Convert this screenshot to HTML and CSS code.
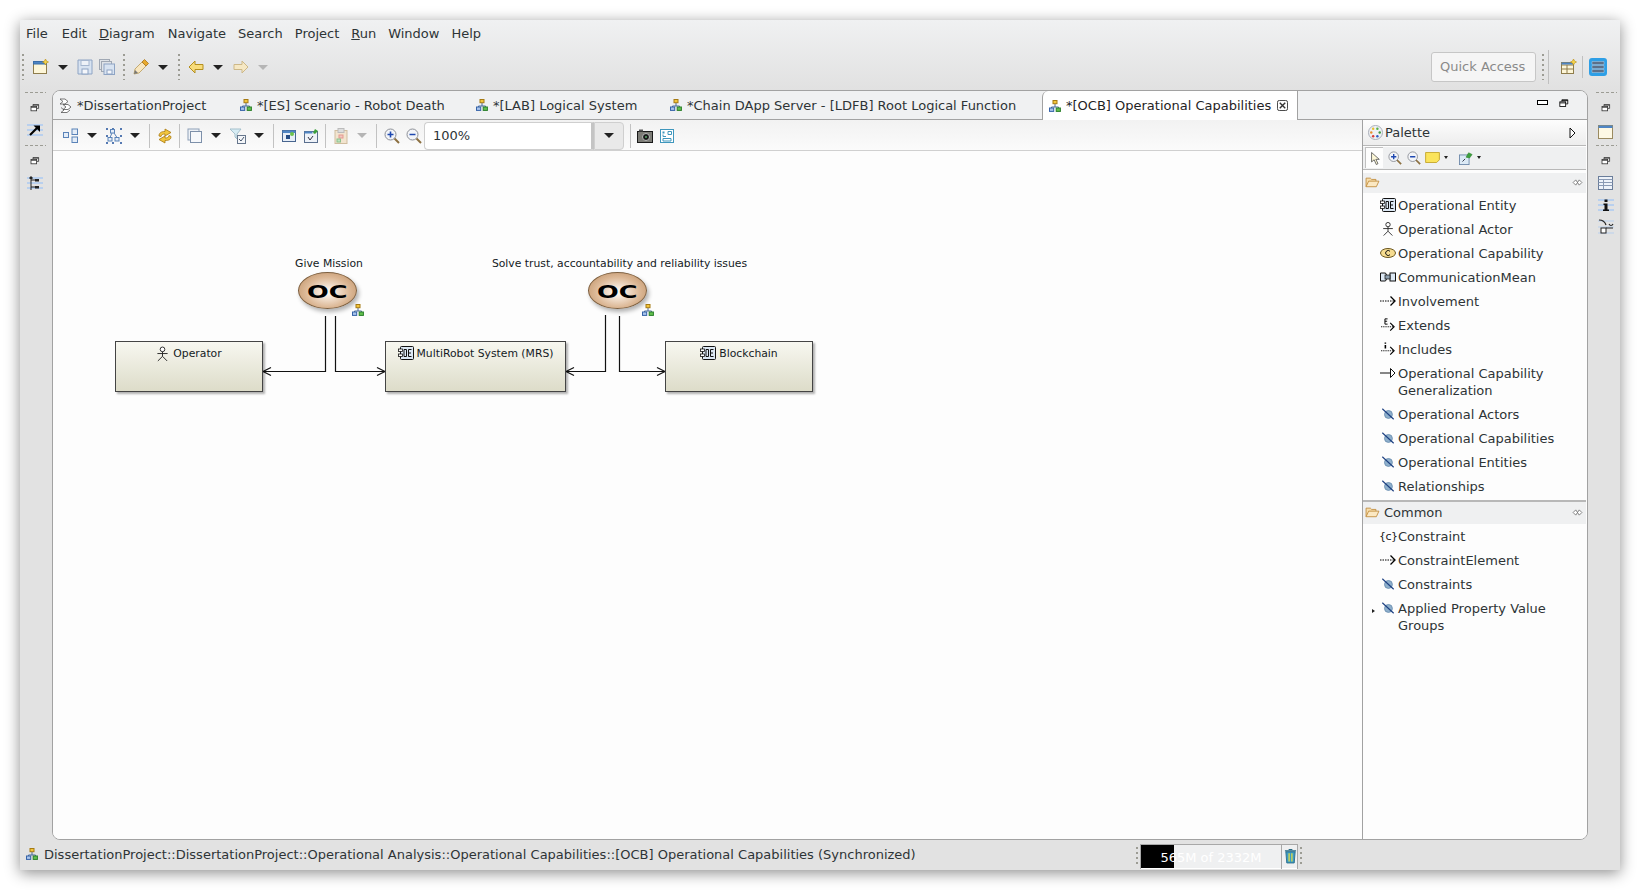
FILE: index.html
```html
<!DOCTYPE html>
<html lang="en">
<head>
    <meta charset="UTF-8">
    <title>Capella - Operational Capabilities</title>
    <link rel="stylesheet" href="styles.css">
</head>
<body>
    <!-- Icon set -->
    <svg class="defs" xmlns="http://www.w3.org/2000/svg">
        <symbol id="i-hier" viewBox="0 0 12 12">
            <path d="M6 4v3M2.500 9V7h7v2" fill="none" stroke="#4a6a9a"/>
            <rect x="4" y="0.500" width="4" height="3.200" fill="#f3c63c" stroke="#a67a12"/>
            <rect x="0.500" y="8" width="4.200" height="3.400" fill="#a9c4ea" stroke="#3562a8"/>
            <rect x="7.200" y="8" width="4.200" height="3.400" fill="#63c04e" stroke="#2a7f2a"/>
        </symbol>
        <symbol id="i-caps" viewBox="0 0 16 16">
            <path d="M2 2h5l3 2.500-3 2.500h-5l3-2.500zM5 7.500h5l3 2.500-3 2.500H5l3-2.500zM3 10.500l3 2.500-3 2.500h6l3-2.500" fill="#fff" stroke="#555" stroke-width="0.800"/>
        </symbol>
        <symbol id="i-restore" viewBox="0 0 12 10">
            <path d="M3.500 2.500V0.500h7v5H8.500" fill="none" stroke="#333"/>
            <rect x="1" y="3" width="7" height="5.500" fill="#fff" stroke="#333"/>
            <path d="M1 4.200h7M3.500 1.500h7" stroke="#333"/>
        </symbol>
        <symbol id="i-new" viewBox="0 0 16 16">
            <rect x="0.500" y="2.500" width="13" height="12" fill="#fdf6d8" stroke="#8f7d4c"/>
            <rect x="0.500" y="2.500" width="13" height="2.500" fill="#4f85c4" stroke="#3b6ea8"/>
            <path d="M12.500 0l1 2 2 1-2 1-1 2-1-2-2-1 2-1z" fill="#f7d54a" stroke="#b98d12" stroke-width="0.600"/>
        </symbol>
        <symbol id="i-save" viewBox="0 0 16 16">
            <path d="M1 1h14v14H1z" fill="#d8e3f1" stroke="#8ea4c4"/>
            <rect x="4" y="1.500" width="8" height="5" fill="#eef2f8" stroke="#a6b7d0"/>
            <rect x="5" y="10" width="6" height="5" fill="#f5f7fb" stroke="#8ea4c4"/>
        </symbol>
        <symbol id="i-saveall" viewBox="0 0 16 16">
            <rect x="0.500" y="0.500" width="10" height="10" fill="#dfe3e8" stroke="#a0a8b4"/>
            <rect x="2.500" y="2.500" width="10" height="10" fill="#dfe3e8" stroke="#a0a8b4"/>
            <rect x="5" y="5" width="10.500" height="10.500" fill="#d8e3f1" stroke="#8ea4c4"/>
            <rect x="8" y="11" width="5" height="4" fill="#f5f7fb" stroke="#8ea4c4"/>
        </symbol>
        <symbol id="i-pen" viewBox="0 0 16 16">
            <path d="M1 15l1-5 7-7 4 4-7 7z" fill="#f8e6c0" stroke="#b89a58" stroke-width="0.800"/>
            <path d="M9 3l2.500-2.500 4 4L13 7z" fill="#e8a92c" stroke="#a8741a" stroke-width="0.800"/>
            <path d="M1 15l1-4 3 3z" fill="#777"/>
        </symbol>
        <symbol id="i-back" viewBox="0 0 16 16">
            <path d="M1 8l6-6v3.500h8v5H7V14z" fill="#f8dc7a" stroke="#b48f1e"/>
        </symbol>
        <symbol id="i-fwd" viewBox="0 0 16 16">
            <path d="M15 8L9 2v3.500H1v5h8V14z" fill="#f6e8c4" stroke="#cdb888"/>
        </symbol>
        <symbol id="i-layout" viewBox="0 0 16 16">
            <rect x="0.500" y="4.500" width="5" height="5" fill="#e4edf8" stroke="#5a83b8"/>
            <rect x="9" y="1" width="5.500" height="5.500" fill="#e4edf8" stroke="#5a83b8"/>
            <rect x="9" y="9" width="5.500" height="5.500" fill="#e4edf8" stroke="#5a83b8"/>
        </symbol>
        <symbol id="i-select" viewBox="0 0 16 16">
            <path d="M0 1h2M7 0v2M14 1h2M0 8h2M14 8h2M0 15h2M7 14v2M14 15h2" stroke="#1f4f9a" stroke-width="1.500"/>
            <rect x="4.500" y="1.500" width="4" height="3.500" fill="#e4edf8" stroke="#5a83b8"/>
            <rect x="2" y="9.500" width="4" height="3.500" fill="#e4edf8" stroke="#5a83b8"/>
            <rect x="9" y="9.500" width="4" height="3.500" fill="#e4edf8" stroke="#5a83b8"/>
            <path d="M6 5l-2 4.500M8 5l3 4.500" stroke="#5a83b8" fill="none"/>
        </symbol>
        <symbol id="i-sync" viewBox="0 0 16 16">
            <path d="M2 8C2 5 4 3.500 8 3.500V1l6 3.500L8 8V6C6 6 4.500 6.500 4 8.500z" fill="#f2c63e" stroke="#a9790f" stroke-width="0.800"/>
            <path d="M14 8.500c0 3-2 4-6 4V15l-6-3.500 6-3.500v2c2 0 3.500-.5 4-2.500z" fill="#f2c63e" stroke="#a9790f" stroke-width="0.800"/>
        </symbol>
        <symbol id="i-copy" viewBox="0 0 16 16">
            <rect x="1" y="1" width="11" height="11" fill="#eef2f7" stroke="#8ea0b8"/>
            <rect x="3.500" y="3.500" width="11" height="11" fill="#f6f8fb" stroke="#7d90aa"/>
        </symbol>
        <symbol id="i-filter" viewBox="0 0 16 16">
            <path d="M0 1h11L7 6v5L5 9V6z" fill="#d6ecf4" stroke="#a5c0cc"/>
            <rect x="7.500" y="7.500" width="8" height="8" fill="#f4f6f9" stroke="#66768c"/>
            <path d="M9 11l2 2 3-4" fill="none" stroke="#44556c"/>
        </symbol>
        <symbol id="i-win" viewBox="0 0 16 16">
            <rect x="1.500" y="2.500" width="13" height="11" fill="#e6eef8" stroke="#47648e"/>
            <rect x="1.500" y="2.500" width="13" height="2.500" fill="#4f85c4"/>
            <rect x="5" y="7" width="4" height="4" fill="#244c86"/>
            <circle cx="11" cy="6" r="2" fill="#6cc24a"/>
        </symbol>
        <symbol id="i-wincheck" viewBox="0 0 16 16">
            <rect x="1.500" y="3.500" width="13" height="11" fill="#eef2f8" stroke="#5a6f8e"/>
            <rect x="1.500" y="3.500" width="8" height="2" fill="#4f85c4"/>
            <path d="M5 9l2 3 3-4" fill="none" stroke="#334"/>
            <path d="M10 5l2-4 3 2-3 3z" fill="#3ca03c"/>
        </symbol>
        <symbol id="i-clip" viewBox="0 0 16 16">
            <rect x="2" y="2.500" width="12" height="13" fill="#f2e4cf" stroke="#d0bd9f"/>
            <rect x="5" y="0.500" width="6" height="4" fill="#ddd" stroke="#bbb"/>
            <rect x="6" y="7" width="4" height="3" fill="#f2c6c0" stroke="#e39a90"/>
            <rect x="4" y="11" width="3.500" height="3" fill="#bfe3c0" stroke="#8ac08c"/>
        </symbol>
        <symbol id="i-zoomin" viewBox="0 0 16 16">
            <path d="M10 10l5 5" stroke="#8c7040" stroke-width="2"/>
            <circle cx="6.500" cy="6.500" r="5.500" fill="#f2f4f8" stroke="#8c8f96"/>
            <path d="M3.500 6.500h6M6.500 3.500v6" stroke="#1e48b0" stroke-width="1.600"/>
        </symbol>
        <symbol id="i-zoomout" viewBox="0 0 16 16">
            <path d="M10 10l5 5" stroke="#8c7040" stroke-width="2"/>
            <circle cx="6.500" cy="6.500" r="5.500" fill="#f2f4f8" stroke="#8c8f96"/>
            <path d="M3.500 6.500h6" stroke="#1e48b0" stroke-width="1.600"/>
        </symbol>
        <symbol id="i-camera" viewBox="0 0 16 14">
            <rect x="0.500" y="2.500" width="15" height="11" fill="#7c7c76" stroke="#1a1a1a"/>
            <rect x="2" y="0.500" width="4" height="2" fill="#555"/>
            <circle cx="9" cy="8" r="3.500" fill="#1a1a1a" stroke="#bbb"/>
            <circle cx="9" cy="8" r="1" fill="#5aa96a"/>
        </symbol>
        <symbol id="i-snap" viewBox="0 0 14 14">
            <rect x="0.500" y="0.500" width="13" height="13" fill="#fff" stroke="#3f97bd"/>
            <rect x="2.500" y="2.500" width="2" height="2" fill="#3f97bd"/>
            <path d="M3 5.500v2h3M8 2.500h3.500v3H8zM3 9.500h8v2.500H3z" fill="none" stroke="#3f97bd"/>
        </symbol>
        <symbol id="i-persp" viewBox="0 0 16 16">
            <rect x="0.500" y="3.500" width="12" height="11" fill="#fdf6d8" stroke="#8f7d4c"/>
            <path d="M0.500 6h12M6 6v8.500M0.500 10h12" stroke="#8f7d4c"/>
            <rect x="0.500" y="3.500" width="12" height="2" fill="#4f85c4"/>
            <path d="M12.500 0l1 2 2 1-2 1-1 2-1-2-2-1 2-1z" fill="#f7d54a" stroke="#b98d12" stroke-width="0.600"/>
        </symbol>
        <symbol id="i-db" viewBox="0 0 18 18">
            <rect width="18" height="18" rx="3" fill="#2e9fe6"/>
            <path d="M3 3.500h12v3H3zM3 7.500h12v3H3zM3 11.500h12v3H3z" fill="#5d7089" stroke="#cfe4f4" stroke-width="0.400"/>
        </symbol>
        <symbol id="i-arrow" viewBox="0 0 16 16">
            <path d="M0 3h16M0 8h16M0 13h16" stroke="#b9d0ee" stroke-width="2"/>
            <path d="M3 13L10 6" stroke="#000" stroke-width="2.200"/>
            <path d="M6.500 3.500h6.500v6.500z" fill="#000"/>
        </symbol>
        <symbol id="i-tree" viewBox="0 0 16 16">
            <path d="M0 3h16M0 8h16M0 13h16" stroke="#b9d0ee" stroke-width="2"/>
            <path d="M4 1v14M4 5h5M4 12h5" stroke="#222" fill="none"/>
            <rect x="2.500" y="2" width="3" height="2" fill="#222"/>
            <rect x="8" y="4" width="4" height="2.500" fill="#222"/>
            <rect x="8" y="11" width="4" height="2.500" fill="#222"/>
        </symbol>
        <symbol id="i-window" viewBox="0 0 16 14">
            <rect x="0.500" y="0.500" width="14" height="13" fill="#fdf8e4" stroke="#9a8a60"/>
            <rect x="0.500" y="0.500" width="14" height="2.500" fill="#4f85c4"/>
        </symbol>
        <symbol id="i-table" viewBox="0 0 16 14">
            <rect x="0.500" y="0.500" width="14" height="13" fill="#eef3fa" stroke="#6a7d9a"/>
            <path d="M0.500 3.500h14M0.500 6.500h14M0.500 9.500h14M5.500 3.500v10" stroke="#8a9ab4"/>
        </symbol>
        <symbol id="i-info" viewBox="0 0 16 16">
            <path d="M0 3h16M0 8h16M0 13h16" stroke="#b9d0ee" stroke-width="2"/>
            <path d="M6.500 2.500h3v2.500h-3zM5.500 6.500h4v6h1.500v1.500H5V12.500h1.500V8H5.500z" fill="#111"/>
        </symbol>
        <symbol id="i-flow" viewBox="0 0 16 16">
            <path d="M0 2h16M0 8h16M0 14h16" stroke="#b9d0ee"/>
            <path d="M1 1c4 0 6 2 7 5M11 5c1 2 3 2 4 0M8 9h7" fill="none" stroke="#222" stroke-width="1.200"/>
            <rect x="3" y="9" width="5" height="5" fill="#fff" stroke="#222"/>
        </symbol>
        <symbol id="i-palette" viewBox="0 0 16 16">
            <circle cx="8" cy="8" r="7.500" fill="#eef0f4" stroke="#a6acb6"/>
            <circle cx="5.500" cy="4" r="1.300" fill="#e8c02c"/>
            <circle cx="10" cy="4" r="1.300" fill="#56b04c"/>
            <circle cx="3.500" cy="8" r="1.300" fill="#e89030"/>
            <circle cx="12.500" cy="8" r="1.300" fill="#3e9a3e"/>
            <circle cx="5.500" cy="12" r="1.300" fill="#d83a3a"/>
            <circle cx="10" cy="12" r="1.300" fill="#2f5fc8"/>
        </symbol>
        <symbol id="i-cursor" viewBox="0 0 14 16">
            <path d="M3 1v11l3-2.500 2.500 5.500 2-1-2.500-5h4z" fill="#fdf8d8" stroke="#333" stroke-width="0.800"/>
        </symbol>
        <symbol id="i-note" viewBox="0 0 16 12">
            <path d="M0.500 0.500h15v8l-3 3H0.500z" fill="#fbe45c" stroke="#c4a52a"/>
        </symbol>
        <symbol id="i-link" viewBox="0 0 16 16">
            <rect x="0.500" y="4.500" width="11" height="11" fill="#dceaf6" stroke="#6a86a8"/>
            <path d="M4 12l3-3" stroke="#223"/>
            <path d="M8 7l3-5 4 2-3 4z" fill="#3ca03c" stroke="#2a7a2a" stroke-width="0.600"/>
        </symbol>
        <symbol id="i-folder" viewBox="0 0 16 14">
            <path d="M0.500 12.500v-10h5l1.500 1.500h5v2" fill="#f7ddaa" stroke="#c08a3a"/>
            <path d="M0.500 12.500l3-6.500h12l-3 6.500z" fill="#fbe8c2" stroke="#c08a3a"/>
        </symbol>
        <symbol id="i-pin" viewBox="0 0 12 8">
            <path d="M1 4l3-3 2 3-2 3zM11 4L8 1 6 4l2 3z" fill="#fff" stroke="#666" stroke-width="0.900"/>
        </symbol>
        <symbol id="i-entity" viewBox="0 0 16 14">
            <rect x="2.500" y="0.500" width="13" height="13" rx="1" fill="#dce8f4" stroke="#111"/>
            <rect x="0.500" y="3" width="4" height="2.500" fill="#fff" stroke="#111" stroke-width="0.800"/>
            <rect x="0.500" y="8" width="4" height="2.500" fill="#fff" stroke="#111" stroke-width="0.800"/>
            <path d="M6 3.500h2.500v7H6zM13.500 3.500h-3v7h3M10.500 7h2.500" fill="none" stroke="#111"/>
        </symbol>
        <symbol id="i-actor" viewBox="0 0 14 16">
            <circle cx="7" cy="3" r="2.500" fill="#fff" stroke="#222"/>
            <path d="M7 5.500v5M1.500 7.500h11M7 10.500L2 15.500M7 10.500l5 5" fill="none" stroke="#222"/>
        </symbol>
        <symbol id="i-cap" viewBox="0 0 16 10">
            <ellipse cx="8" cy="5" rx="7.500" ry="4.500" fill="#f6dc90" stroke="#6a5620"/>
            <path d="M10 3.300a2.500 2.500 0 1 0 0 3.400" fill="none" stroke="#111"/>
        </symbol>
        <symbol id="i-comm" viewBox="0 0 16 10">
            <path d="M0.500 1h5l2 4-2 4h-5z" fill="#dce8f4" stroke="#111"/>
            <rect x="10" y="1" width="5.500" height="8" fill="#dce8f4" stroke="#111"/>
            <path d="M7 5h3" stroke="#111"/>
            <rect x="5" y="3" width="5" height="4" fill="#8ea0b0" stroke="#111" stroke-width="0.700"/>
        </symbol>
        <symbol id="i-dash" viewBox="0 0 16 10">
            <path d="M0 5h14" stroke="#000" stroke-dasharray="1.500 1"/>
            <path d="M10.500 0.500L15 5l-4.500 4.500" fill="none" stroke="#000" stroke-width="1.300"/>
        </symbol>
        <symbol id="i-ext" viewBox="0 0 16 16">
            <path d="M0 10h14" stroke="#000" stroke-dasharray="1.500 1"/>
            <path d="M10.500 5.500L15 10l-4.500 4.500" fill="none" stroke="#000" stroke-width="1.300"/>
            <path d="M7.500 1h-3v6h3M4.500 3.700h2.500" fill="none" stroke="#000" stroke-width="1.100"/>
        </symbol>
        <symbol id="i-inc" viewBox="0 0 16 16">
            <path d="M0 10h14" stroke="#000" stroke-dasharray="1.500 1"/>
            <path d="M10.500 5.500L15 10l-4.500 4.500" fill="none" stroke="#000" stroke-width="1.300"/>
            <path d="M5 0.500v1.500M5 3.500v4" stroke="#000" stroke-width="1.800"/>
        </symbol>
        <symbol id="i-gen" viewBox="0 0 16 10">
            <path d="M0 5h10" stroke="#111"/>
            <path d="M10.500 0.500L15 5l-4.500 4.500z" fill="#fff" stroke="#111"/>
        </symbol>
        <symbol id="i-hide" viewBox="0 0 16 16">
            <circle cx="8.500" cy="8.500" r="4.500" fill="#8fb0cc" stroke="#6a8eb0"/>
            <path d="M1.500 2l13 12" stroke="#1c3f80" stroke-width="1.300"/>
        </symbol>
        <symbol id="i-trash" viewBox="0 0 14 16">
            <path d="M2 3.500h10L11 15.500H3z" fill="#3d9cc4" stroke="#2a6d8c"/>
            <path d="M5.500 5v9M8.500 5v9" stroke="#d9d84a" stroke-width="1.500"/>
            <path d="M1 2.500h12M5 1h4" stroke="#256a85" stroke-width="1.300"/>
        </symbol>
    </svg>

    <div class="window">
        <div class="top">
            <div class="menubar">
                <span>File</span>
                <span>Edit</span>
                <span><u>D</u>iagram</span>
                <span>Navigate</span>
                <span>Search</span>
                <span>Project</span>
                <span><u>R</u>un</span>
                <span>Window</span>
                <span>Help</span>
            </div>
            <div class="toolbar">
                <i class="handle"></i>
                <svg class="ic first"><use href="#i-new"/></svg>
                <b class="dd"></b>
                <svg class="ic"><use href="#i-save"/></svg>
                <svg class="ic gap6"><use href="#i-saveall"/></svg>
                <i class="handle gap8"></i>
                <svg class="ic gap8"><use href="#i-pen"/></svg>
                <b class="dd"></b>
                <i class="handle"></i>
                <svg class="ic gap8"><use href="#i-back"/></svg>
                <b class="dd"></b>
                <svg class="ic"><use href="#i-fwd"/></svg>
                <b class="dd off"></b>
                <div class="quick">Quick Access</div>
                <i class="handle gap8"></i>
                <i class="vline"></i>
                <svg class="ic gap12"><use href="#i-persp"/></svg>
                <i class="vline short"></i>
                <svg class="ic-db"><use href="#i-db"/></svg>
            </div>
        </div>

        <div class="middle">
            <div class="trim">
                <i class="trim-handle"></i>
                <svg class="trim-restore"><use href="#i-restore"/></svg>
                <svg class="ic trim-ic"><use href="#i-arrow"/></svg>
                <i class="trim-handle"></i>
                <svg class="trim-restore"><use href="#i-restore"/></svg>
                <svg class="ic trim-ic"><use href="#i-tree"/></svg>
            </div>

            <div class="editor">
                <div class="tabs">
                    <div class="tab t1"><svg class="ic"><use href="#i-caps"/></svg>*DissertationProject</div>
                    <div class="tab t2"><svg class="tab-ic"><use href="#i-hier"/></svg>*[ES] Scenario - Robot Death</div>
                    <div class="tab t3"><svg class="tab-ic"><use href="#i-hier"/></svg>*[LAB] Logical System</div>
                    <div class="tab t4"><svg class="tab-ic"><use href="#i-hier"/></svg>*Chain DApp Server - [LDFB] Root Logical Function</div>
                    <div class="tab active"><svg class="tab-ic"><use href="#i-hier"/></svg>*[OCB] Operational Capabilities
                        <svg class="close" viewBox="0 0 12 12"><rect x="0.500" y="0.500" width="11" height="11" rx="2" fill="#fff" stroke="#333"/><path d="M3 3l6 6M9 3l-6 6" stroke="#333" stroke-width="1.500"/></svg>
                    </div>
                    <div class="tab-tools">
                        <i class="minimize"></i>
                        <svg class="maximize" viewBox="0 0 12 10"><path d="M3.500 2.500V0.500h7v5H8.500" fill="none" stroke="#000"/><rect x="1" y="3" width="7" height="5.500" fill="#fff" stroke="#000"/><path d="M1 4.300h7M3.500 1.500h7" stroke="#000"/></svg>
                    </div>
                </div>

                <div class="editor-body">
                    <div class="diagram">
                        <div class="diagram-bar">
                            <svg class="ic"><use href="#i-layout"/></svg>
                            <b class="dd"></b>
                            <svg class="ic"><use href="#i-select"/></svg>
                            <b class="dd"></b>
                            <i class="sep"></i>
                            <svg class="ic"><use href="#i-sync"/></svg>
                            <i class="sep after-ic"></i>
                            <svg class="ic"><use href="#i-copy"/></svg>
                            <b class="dd"></b>
                            <svg class="ic"><use href="#i-filter"/></svg>
                            <b class="dd"></b>
                            <i class="sep"></i>
                            <svg class="ic"><use href="#i-win"/></svg>
                            <svg class="ic gap6"><use href="#i-wincheck"/></svg>
                            <i class="sep after-ic"></i>
                            <svg class="ic"><use href="#i-clip"/></svg>
                            <b class="dd off"></b>
                            <i class="sep"></i>
                            <svg class="ic"><use href="#i-zoomin"/></svg>
                            <svg class="ic gap6"><use href="#i-zoomout"/></svg>
                            <div class="combo">100%</div>
                            <div class="combo-btn"><b class="dd"></b></div>
                            <i class="sep after-btn"></i>
                            <svg class="ic-camera"><use href="#i-camera"/></svg>
                            <svg class="ic-snap"><use href="#i-snap"/></svg>
                        </div>

                        <div class="canvas">
                            <svg class="links">
                                <path d="M272.500 165V220.500H210M218 216.500L210 220.500L218 224.500"/>
                                <path d="M282.500 165V220.500H332M324 216.500L332 220.500L324 224.500"/>
                                <path d="M552.500 164V220.500H513M521 216.500L513 220.500L521 224.500"/>
                                <path d="M566.500 165V220.500H612M604 216.500L612 220.500L604 224.500"/>
                            </svg>

                            <div class="oc-label l1">Give Mission</div>
                            <div class="oc o1"><span>OC</span></div>
                            <svg class="oc-badge b1"><use href="#i-hier"/></svg>

                            <div class="oc-label l2">Solve trust, accountability and reliability issues</div>
                            <div class="oc o2"><span>OC</span></div>
                            <svg class="oc-badge b2"><use href="#i-hier"/></svg>

                            <div class="node n1"><svg class="node-actor"><use href="#i-actor"/></svg>Operator</div>
                            <div class="node n2"><svg class="node-entity"><use href="#i-entity"/></svg>MultiRobot System (MRS)</div>
                            <div class="node n3"><svg class="node-entity"><use href="#i-entity"/></svg>Blockchain</div>
                        </div>
                    </div>

                    <div class="palette">
                        <div class="palette-head">
                            <svg class="ic-pal"><use href="#i-palette"/></svg>
                            <span>Palette</span>
                            <svg class="palette-toggle" viewBox="0 0 7 12"><path d="M1 1l5 5-5 5z" fill="#fff" stroke="#111"/></svg>
                        </div>
                        <div class="palette-tools">
                            <span class="tool-on"><svg class="ic-cursor"><use href="#i-cursor"/></svg></span>
                            <svg class="ic-tool"><use href="#i-zoomin"/></svg>
                            <svg class="ic-tool"><use href="#i-zoomout"/></svg>
                            <svg class="ic-note"><use href="#i-note"/></svg>
                            <b class="dd-small"></b>
                            <svg class="ic-tool"><use href="#i-link"/></svg>
                            <b class="dd-small"></b>
                        </div>
                        <div class="drawer-head">
                            <svg class="ic-folder"><use href="#i-folder"/></svg>
                            <svg class="ic-pin"><use href="#i-pin"/></svg>
                        </div>
                        <ul class="entries first-list">
                            <li><svg><use href="#i-entity"/></svg>Operational Entity</li>
                            <li><svg><use href="#i-actor"/></svg>Operational Actor</li>
                            <li><svg><use href="#i-cap"/></svg>Operational Capability</li>
                            <li><svg><use href="#i-comm"/></svg>CommunicationMean</li>
                            <li><svg><use href="#i-dash"/></svg>Involvement</li>
                            <li><svg><use href="#i-ext"/></svg>Extends</li>
                            <li><svg><use href="#i-inc"/></svg>Includes</li>
                            <li><svg><use href="#i-gen"/></svg>Operational Capability<br>Generalization</li>
                            <li><svg><use href="#i-hide"/></svg>Operational Actors</li>
                            <li><svg><use href="#i-hide"/></svg>Operational Capabilities</li>
                            <li><svg><use href="#i-hide"/></svg>Operational Entities</li>
                            <li><svg><use href="#i-hide"/></svg>Relationships</li>
                        </ul>
                        <div class="drawer-head second">
                            <svg class="ic-folder"><use href="#i-folder"/></svg>
                            <span>Common</span>
                            <svg class="ic-pin"><use href="#i-pin"/></svg>
                        </div>
                        <ul class="entries">
                            <li><span class="braces">{c}</span>Constraint</li>
                            <li><svg><use href="#i-dash"/></svg>ConstraintElement</li>
                            <li><svg><use href="#i-hide"/></svg>Constraints</li>
                            <li class="has-arrow"><svg><use href="#i-hide"/></svg>Applied Property Value<br>Groups</li>
                        </ul>
                    </div>
                </div>
            </div>

            <div class="trim right">
                <i class="trim-handle"></i>
                <svg class="trim-restore"><use href="#i-restore"/></svg>
                <svg class="trim-win"><use href="#i-window"/></svg>
                <i class="trim-handle"></i>
                <svg class="trim-restore"><use href="#i-restore"/></svg>
                <svg class="trim-win tbl"><use href="#i-table"/></svg>
                <svg class="ic trim-ic"><use href="#i-info"/></svg>
                <svg class="ic trim-ic"><use href="#i-flow"/></svg>
            </div>
        </div>

        <div class="statusbar">
            <svg class="status-ic"><use href="#i-hier"/></svg>
            <span class="status-text">DissertationProject::DissertationProject::Operational Analysis::Operational Capabilities::[OCB] Operational Capabilities (Synchronized)</span>
            <i class="handle status-handle"></i>
            <div class="heap">
                <div class="heap-bar"><div class="heap-used"></div><span>565M of 2332M</span></div>
                <svg class="ic-trash"><use href="#i-trash"/></svg>
            </div>
            <i class="handle status-handle tail"></i>
        </div>
    </div>
</body>
</html>
```

FILE: styles.css
```css
/* General Page Styling */
html, body {
    margin: 0;
    height: 890px;
    overflow: hidden;
}

body {
    padding: 20px;
    box-sizing: border-box;
    background: #ffffff;
    font-family: 'DejaVu Sans', sans-serif;
    font-size: 13px;
    color: #2e3436;
}

.defs {
    display: none;
}

svg {
    display: block;
    flex: none;
}

/* Window frame */
.window {
    width: 1600px;
    height: 850px;
    display: flex;
    flex-direction: column;
    background: #e2e2e2;
    box-shadow: 0 3px 14px rgba(0, 0, 0, 0.45);
}

.top {
    height: 70px;
    background: linear-gradient(#f0f1f2, #e1e1e1);
}

/* Menu */
.menubar {
    height: 26px;
    display: flex;
    align-items: center;
    padding-left: 6px;
    gap: 12px;
}

.menubar span:first-child {
    margin-right: 2px;
}

.menubar span:nth-child(3) {
    margin-right: 1px;
}

/* Main toolbar */
.toolbar {
    height: 42px;
    display: flex;
    align-items: center;
    padding-left: 2px;
}

.ic {
    width: 16px;
    height: 16px;
}

.first {
    margin-left: 9px;
}

.first + .dd {
    margin-right: 9px;
}

.gap6 {
    margin-left: 6px;
}

.gap8 {
    margin-left: 8px;
}

.gap12 {
    margin-left: 12px;
}

.handle {
    width: 2px;
    height: 26px;
    background: repeating-linear-gradient(#9c9c94 0 2px, transparent 2px 5px);
}

.dd {
    width: 0;
    height: 0;
    margin: 0 10px 0 9px;
    border: 5px solid transparent;
    border-top: 5px solid #222222;
    border-bottom: 0;
}

.dd.off {
    border-top-color: #b5b5b5;
}

.quick {
    margin-left: auto;
    margin-right: -2px;
    width: 95px;
    height: 28px;
    line-height: 28px;
    padding-left: 8px;
    background: #f5f5f5;
    border: 1px solid #c6c6c6;
    border-radius: 3px;
    color: #8a8a8a;
}

.vline {
    width: 1px;
    height: 34px;
    margin-left: 4px;
    background: #c0c0c0;
}

.vline.short {
    height: 22px;
    margin-left: 5px;
}

.ic-db {
    width: 18px;
    height: 18px;
    margin: 0 13px 0 6px;
}

/* Side trims */
.middle {
    flex: 1;
    display: flex;
    min-height: 0;
}

.trim {
    width: 32px;
    flex: none;
    box-sizing: border-box;
    display: flex;
    flex-direction: column;
    align-items: center;
    padding: 2px 2px 0 0;
}

.trim.right {
    padding: 2px 0 0 4px;
}

.trim-handle {
    width: 21px;
    height: 1px;
    flex: none;
    margin-bottom: 11px;
    background: repeating-linear-gradient(90deg, #9c9c94 0 3px, transparent 3px 5px);
}

.trim-restore {
    width: 10px;
    height: 8px;
    margin-bottom: 10px;
}

.trim-ic {
    margin-bottom: 7px;
}

.trim.right .trim-ic {
    margin-bottom: 6px;
}

.trim-win {
    width: 16px;
    height: 14px;
    margin: 3px 0 6px 0;
}

.trim-win.tbl {
    margin: 1px 0 7px 0;
}

/* Editor panel */
.editor {
    width: 1536px;
    height: 750px;
    flex: none;
    box-sizing: border-box;
    display: flex;
    flex-direction: column;
    background: #fdfdfd;
    border: 1px solid #a2a2a2;
    border-radius: 8px;
    overflow: hidden;
}

.tabs {
    height: 28px;
    flex: none;
    display: flex;
    align-items: stretch;
    background: #f0f1f2;
    border-bottom: 1px solid #a2a2a2;
}

.tab {
    display: flex;
    align-items: center;
    white-space: nowrap;
    padding-left: 5px;
}

.t1 .ic {
    margin-right: 3px;
}

.t1 {
    width: 183px;
    box-sizing: border-box;
}

.tab-ic {
    width: 12px;
    height: 12px;
    margin-right: 5px;
}

.t2 {
    margin-left: 4px;
    width: 236px;
    box-sizing: border-box;
    padding-left: 0;
}

.t3 {
    width: 194px;
    box-sizing: border-box;
    padding-left: 0;
}

.t4 {
    width: 372px;
    box-sizing: border-box;
    padding-left: 0;
}

.tab.active {
    width: 256px;
    box-sizing: border-box;
    padding-left: 6px;
    margin-bottom: -1px;
    background: #ffffff;
    border: 1px solid #a2a2a2;
    border-bottom: 0;
    border-top: 0;
    border-radius: 6px 0 0 0;
    color: #1f2324;
}

.close {
    width: 11px;
    height: 11px;
    margin-left: 6px;
}

.tab-tools {
    margin-left: auto;
    display: flex;
    align-items: flex-start;
    padding: 9px 18px 0 0;
}

.minimize {
    width: 9px;
    height: 3px;
    background: #ffffff;
    border: 1px solid #000000;
}

.maximize {
    width: 10px;
    height: 9px;
    margin: -1px 0 0 11px;
}

.editor-body {
    flex: 1;
    display: flex;
    min-height: 0;
}

/* Diagram area */
.diagram {
    width: 1309px;
    flex: none;
    display: flex;
    flex-direction: column;
}

.diagram-bar {
    height: 31px;
    flex: none;
    display: flex;
    align-items: center;
    box-sizing: border-box;
    padding: 1px 0 0 10px;
    background: linear-gradient(#f2f2f2, #fbfbfb);
    border-bottom: 1px solid #d0d0d0;
}

.diagram-bar .dd {
    margin: 0 9px 0 8px;
}

.sep {
    width: 1px;
    height: 24px;
    margin-right: 7px;
    background: #c2c2c2;
}

.sep.after-ic {
    margin-left: 6px;
}

.sep.after-btn {
    margin: 0 6px;
}

.combo {
    width: 158px;
    height: 26px;
    line-height: 26px;
    padding-left: 8px;
    margin-left: 2px;
    background: #ffffff;
    border: 1px solid #cfcfcf;
    border-right: 3px solid #c4c4c4;
    border-radius: 4px 0 0 4px;
}

.combo-btn {
    width: 28px;
    height: 26px;
    display: flex;
    align-items: center;
    justify-content: center;
    background: #e9e9e9;
    border: 1px solid #cfcfcf;
    border-radius: 0 4px 4px 0;
}

.combo-btn .dd {
    margin: 0;
}

.ic-camera {
    width: 16px;
    height: 14px;
}

.ic-snap {
    width: 14px;
    height: 14px;
    margin-left: 7px;
}

.canvas {
    flex: 1;
    position: relative;
    background: #fdfdfd;
}

.links {
    position: absolute;
    left: 0;
    top: 0;
    width: 100%;
    height: 100%;
}

.links path {
    fill: none;
    stroke: #111111;
    stroke-width: 1.2;
}

/* Operational capability bubbles */
.oc-label {
    position: absolute;
    top: 106px;
    font-size: 10.800px;
    line-height: 14px;
    color: #141a24;
    white-space: nowrap;
    transform: translateX(-50%);
}

.l1 {
    left: 276px;
}

.l2 {
    left: 566.500px;
}

.oc {
    position: absolute;
    top: 121px;
    width: 59px;
    height: 37px;
    box-sizing: border-box;
    padding-top: 2px;
    display: flex;
    align-items: center;
    justify-content: center;
    border: 1px solid #7d5f3f;
    border-radius: 50%;
    background: radial-gradient(ellipse at 50% 55%, #fdf5ee 8%, #dcb896 55%, #bf9268 92%);
    box-shadow: 2px 3px 4px rgba(0, 0, 0, 0.3);
}

.oc span {
    font-size: 18px;
    font-weight: bold;
    line-height: 18px;
    color: #000000;
    transform: scaleX(1.42);
}

.o1 {
    left: 245px;
}

.o2 {
    left: 535px;
}

.oc-badge {
    position: absolute;
    top: 153px;
    width: 12px;
    height: 12px;
}

.b1 {
    left: 299px;
}

.b2 {
    left: 589px;
}

/* Nodes */
.node {
    position: absolute;
    top: 190px;
    height: 51px;
    box-sizing: border-box;
    display: flex;
    justify-content: center;
    align-items: flex-start;
    padding-top: 4px;
    font-size: 10.800px;
    line-height: 15px;
    color: #141a24;
    background: linear-gradient(#f7f7f0, #dddcc9);
    border: 1px solid #444444;
    box-shadow: 2px 2px 2px rgba(0, 0, 0, 0.3);
}

.n1 {
    left: 62px;
    width: 148px;
}

.n2 {
    left: 332px;
    width: 181px;
}

.n3 {
    left: 612px;
    width: 148px;
}

.node-actor {
    width: 13px;
    height: 16px;
    margin-right: 4px;
}

.node-entity {
    width: 16px;
    height: 14px;
    margin-right: 3px;
}

/* Palette */
.palette {
    flex: 1;
    min-width: 0;
    box-sizing: border-box;
    padding-right: 1px;
    background: #fdfdfd;
    border-left: 1px solid #a2a2a2;
}

.palette-head {
    height: 26px;
    box-sizing: border-box;
    display: flex;
    align-items: center;
    padding: 0 10px 0 5px;
    background: linear-gradient(#fdfdfd, #ededed);
    border-bottom: 1px solid #b8b8b8;
}

.ic-pal {
    width: 15px;
    height: 15px;
}

.palette-head span {
    margin-left: 2px;
}

.palette-toggle {
    width: 7px;
    height: 12px;
    margin-left: auto;
}

.palette-tools {
    height: 23px;
    box-sizing: border-box;
    display: flex;
    align-items: center;
    padding: 0 0 1px 2px;
    background: #eff0f1;
    border-bottom: 1px solid #b8b8b8;
    margin-top: 1px;
}

.tool-on {
    width: 17px;
    height: 20px;
    display: flex;
    align-items: center;
    justify-content: center;
    background: #fdfdfd;
    border: 1px solid #c0c0c0;
    border-width: 1px 0 0 1px;
}

.ic-cursor {
    width: 12px;
    height: 15px;
}

.ic-tool {
    width: 14px;
    height: 14px;
    margin-left: 5px;
}

.ic-note {
    width: 15px;
    height: 11px;
    margin-left: 4px;
}

.dd-small {
    width: 0;
    height: 0;
    margin: 0 6px 0 4px;
    border: 2.500px solid transparent;
    border-top: 3px solid #222222;
    border-bottom: 0;
}

.drawer-head {
    height: 20px;
    box-sizing: border-box;
    margin-top: 3px;
    display: flex;
    align-items: center;
    padding: 0 3px 2px 2px;
    background: #eff0f1;
}

.drawer-head.second {
    margin-top: 0;
    height: 24px;
    border-top: 2px solid #b8b8b8;
}

.drawer-head span {
    margin-left: 4px;
}

.ic-folder {
    width: 15px;
    height: 12px;
}

.ic-pin {
    width: 11px;
    height: 7px;
    margin-left: auto;
}

.entries {
    list-style: none;
    margin: 0;
    padding: 0 0 4px 0;
}

.first-list {
    padding-bottom: 2px;
}

.entries li {
    position: relative;
    padding: 4px 0 3px 35px;
    line-height: 17px;
    color: #2e3436;
}

.entries li svg {
    position: absolute;
    left: 17px;
    top: 5px;
    width: 16px;
    height: 14px;
}

.braces {
    position: absolute;
    left: 16px;
    top: 4px;
    font-size: 11px;
    letter-spacing: -0.500px;
    color: #222222;
}

.has-arrow::before {
    content: "";
    position: absolute;
    left: 9px;
    top: 13px;
    border: 2.500px solid transparent;
    border-left: 3px solid #222222;
    border-right: 0;
}

/* Status bar */
.statusbar {
    height: 30px;
    flex: none;
    box-sizing: border-box;
    display: flex;
    align-items: center;
    padding: 0 0 2px 6px;
    position: relative;
}

.status-ic {
    width: 12px;
    height: 12px;
}

.status-text {
    margin-left: 6px;
    white-space: nowrap;
}

.status-handle {
    position: absolute;
    left: 1116px;
    top: 7px;
    height: 20px;
}

.status-handle.tail {
    left: 1280px;
}

.heap {
    position: absolute;
    left: 1120px;
    top: 4px;
    width: 158px;
    height: 25px;
    box-sizing: border-box;
    display: flex;
    background: #eff0f1;
    border: 1px solid #a8a8a8;
    border-width: 1px 1px 0 1px;
    box-shadow: inset 0 -1px 0 #ffffff;
}

.heap-bar {
    position: relative;
    width: 140px;
    flex: none;
    display: flex;
    align-items: center;
    justify-content: center;
    border-right: 1px solid #a8a8a8;
    color: #ffffff;
}

.heap-bar span {
    position: relative;
}

.heap-used {
    position: absolute;
    left: 0;
    top: 0;
    bottom: 1px;
    width: 33px;
    background: #000000;
}

.ic-trash {
    width: 13px;
    height: 16px;
    margin: 3px 0 0 2px;
}
```
